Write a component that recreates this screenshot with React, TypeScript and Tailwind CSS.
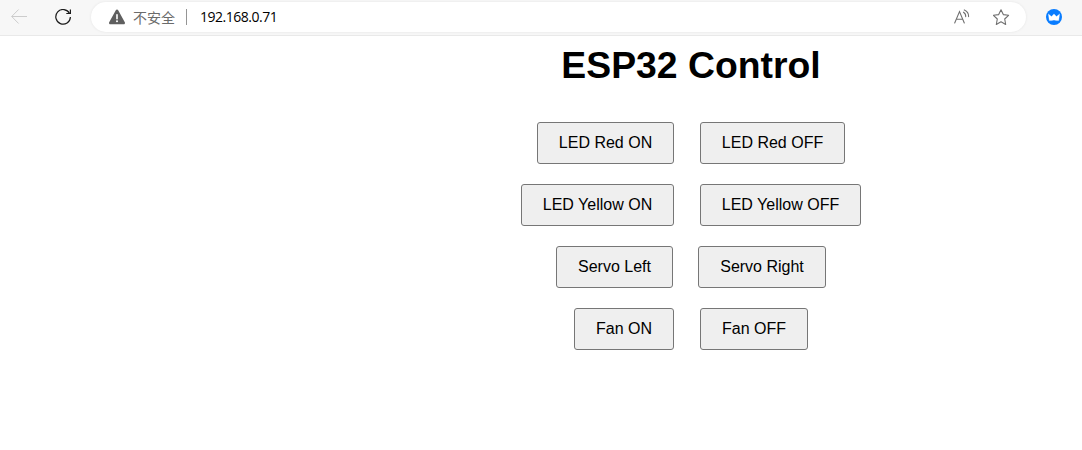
const rows = [
  { label: 'led-red', left: ['LED Red ON', 'w-[137px]'], right: ['LED Red OFF', 'w-[145px]'], gap: 'gap-[26px]' },
  { label: 'led-yellow', left: ['LED Yellow ON', 'w-[153px]'], right: ['LED Yellow OFF', 'w-[161px]'], gap: 'gap-[26px]' },
  { label: 'servo', left: ['Servo Left', 'w-[117px]'], right: ['Servo Right', 'w-[128px]'], gap: 'gap-[25px]' },
  { label: 'fan', left: ['Fan ON', 'w-[100px]'], right: ['Fan OFF', 'w-[108px]'], gap: 'gap-[26px]' },
];

function ControlButton({ text, width }: { text: string; width: string }) {
  return (
    <button
      className={`${width} h-[42px] shrink-0 rounded-[3px] border border-[#767676] bg-[#efefef] text-center text-[16px] leading-[38px] whitespace-nowrap text-black`}
    >
      {text}
    </button>
  );
}

function BackIcon() {
  return (
    <svg className="size-4 shrink-0" viewBox="0 0 16 16" fill="none" stroke="#cccccc" strokeWidth="1">
      <path d="M16 7.5H.8M7.6.5.7 7.5l6.9 7" />
    </svg>
  );
}

function ReloadIcon() {
  return (
    <svg className="size-4 shrink-0" viewBox="0 0 16 16" fill="none" stroke="#1b1b1b" strokeWidth="1.2">
      <path d="M14.6 4.5A7.3 7.3 0 1 0 15.4 8" />
      <path d="M15.4.4v4.1h-4.1" />
    </svg>
  );
}

function WarningIcon() {
  return (
    <svg className="h-4 w-4 shrink-0" viewBox="0 0 16 16">
      <path d="M6.8 1.2a1.35 1.35 0 0 1 2.4 0l6.6 12.1a1.35 1.35 0 0 1-1.2 2H1.4a1.35 1.35 0 0 1-1.2-2Z" fill="#5f5f5f" />
      <path d="M8 5.8v4" stroke="#fff" strokeWidth="1.6" strokeLinecap="round" />
      <circle cx="8" cy="12.3" r="1" fill="#fff" />
    </svg>
  );
}

function ReadAloudIcon() {
  return (
    <svg className="h-4 w-4 shrink-0" viewBox="0 0 16 16" fill="none" stroke="#707070" strokeWidth="1.1" strokeLinecap="round">
      <path d="M.7 14 5.5 2.6 10.3 14M2.4 10.2h6.2" />
      <path d="M9.5 3.2a4.6 4.6 0 0 1 2.2 4.4M10.3.9a7 7 0 0 1 4.3 6.7" />
    </svg>
  );
}

function StarIcon() {
  return (
    <svg className="h-[17px] w-[17px] shrink-0" viewBox="0 0 17 17" fill="none" stroke="#707070" strokeWidth="1.1" strokeLinejoin="round">
      <path d="m8 .7 2.3 4.9 5.3.7-3.9 3.7 1 5.5L8 12.8l-4.7 2.7 1-5.5L.4 6.3l5.3-.7Z" />
    </svg>
  );
}

function CrownIcon() {
  return (
    <svg className="size-4 shrink-0" viewBox="0 0 16 16">
      <circle cx="8" cy="8" r="8" fill="#087cff" />
      <path d="M2.4 4.9 5.5 7.6 8 4.9l2.5 2.7 3.1-2.7-.9 6.7h-2.3Q8 10.5 5.6 11.6H3.3Z" fill="#fff" stroke="#fff" strokeWidth=".3" strokeLinejoin="round" />
    </svg>
  );
}

export default function App() {
  return (
    <div className="flex h-[450px] w-[1082px] flex-col overflow-hidden bg-white font-['Liberation_Sans',Arial,sans-serif] text-black">
      <header className="flex h-9 shrink-0 items-start border-b border-[#e9e9e9] bg-[#f7f7f7]">
        <div className="flex h-[34px] w-[91px] shrink-0 items-center gap-7 pl-[11px]">
          <BackIcon />
          <ReloadIcon />
        </div>
        <div className="mt-[2px] flex h-[30px] w-[935px] shrink-0 items-center rounded-full bg-white pr-4 pl-[18px] shadow-[0_0_3px_rgba(0,0,0,0.08)]">
          <WarningIcon />
          <span className="-mt-px ml-2 w-[43px] text-[14px] leading-5 whitespace-nowrap text-[#6b6b6b] font-['Noto_Sans_CJK_SC',sans-serif]">不安全</span>
          <span className="ml-[10px] h-4 w-px bg-[#959595]" />
          <span className="ml-[13px] text-[14px] leading-5 tracking-[-0.48px] text-black font-['Open_Sans',sans-serif]">192.168.0.71</span>
          <div className="ml-auto flex items-center gap-[23px]">
            <ReadAloudIcon />
            <StarIcon />
          </div>
        </div>
        <div className="flex h-[34px] items-center pl-5">
          <CrownIcon />
        </div>
      </header>
      <main className="ml-[300px] flex w-[782px] flex-col items-center">
        <h1 className="mt-[7px] text-[37.33px] leading-[44px] font-bold">ESP32 Control</h1>
        <div className="mt-[35px] flex flex-col items-center gap-5">
          {rows.map((row) => (
            <div key={row.label} className={`flex justify-center ${row.gap}`}>
              <ControlButton text={row.left[0]} width={row.left[1]} />
              <ControlButton text={row.right[0]} width={row.right[1]} />
            </div>
          ))}
        </div>
      </main>
    </div>
  );
}
